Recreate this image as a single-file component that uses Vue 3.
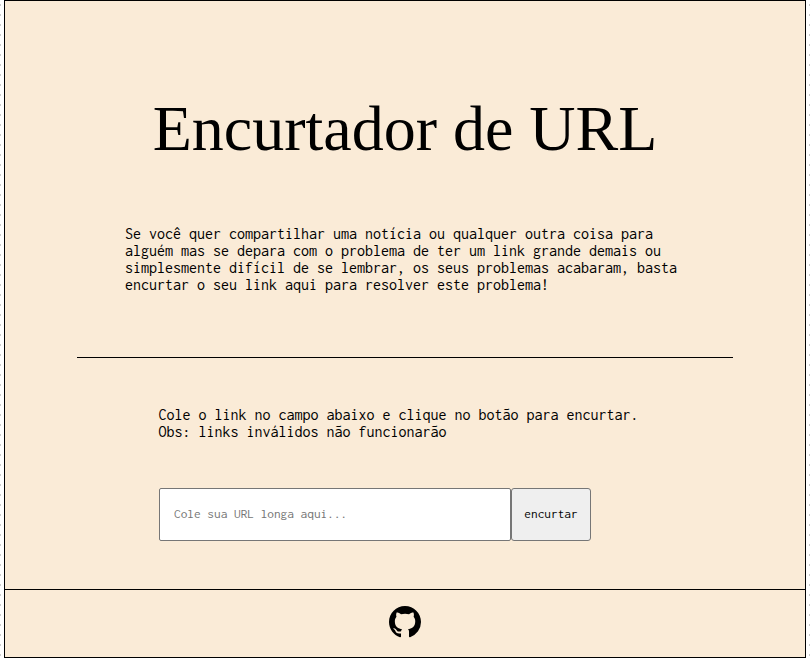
<script setup>
import { ref } from 'vue'

const url = ref('')
</script>

<template>
  <div class="page">
    <div class="frame">
      <main class="content">
        <h1 class="title">Encurtador de URL</h1>
        <p class="intro">
          Se você quer compartilhar uma notícia ou qualquer outra coisa para<br />
          alguém mas se depara com o problema de ter um link grande demais ou<br />
          simplesmente difícil de se lembrar, os seus problemas acabaram, basta<br />
          encurtar o seu link aqui para resolver este problema!
        </p>
        <section class="shortener">
          <p class="hint">
            Cole o link no campo abaixo e clique no botão para encurtar.<br />
            Obs: links inválidos não funcionarão
          </p>
          <form class="form" @submit.prevent>
            <input v-model="url" class="field" type="text" placeholder="Cole sua URL longa aqui..." />
            <button class="submit" type="submit">encurtar</button>
          </form>
        </section>
      </main>
      <footer class="footer">
        <svg class="github" viewBox="0 0 16 16" aria-hidden="true">
          <path d="M8 0C3.58 0 0 3.58 0 8c0 3.54 2.29 6.53 5.47 7.59.4.07.55-.17.55-.38 0-.19-.01-.82-.01-1.49-2.01.37-2.53-.49-2.69-.94-.09-.23-.48-.94-.82-1.13-.28-.15-.68-.52-.01-.53.63-.01 1.08.58 1.23.82.72 1.21 1.87.87 2.33.66.07-.52.28-.87.51-1.07-1.78-.2-3.64-.89-3.64-3.95 0-.87.31-1.59.82-2.15-.08-.2-.36-1.02.08-2.12 0 0 .67-.21 2.2.82.64-.18 1.32-.27 2-.27s1.36.09 2 .27c1.53-1.04 2.2-.82 2.2-.82.44 1.1.16 1.92.08 2.12.51.56.82 1.27.82 2.15 0 3.07-1.87 3.75-3.65 3.95.29.25.54.73.54 1.48 0 1.07-.01 1.93-.01 2.2 0 .21.15.46.55.38A8.01 8.01 0 0 0 16 8c0-4.42-3.58-8-8-8z" />
        </svg>
      </footer>
    </div>
  </div>
</template>

<style>
body {
  margin: 0;
  background: #fff;
}
</style>

<style scoped>
.page {
  box-sizing: border-box;
  height: 658px;
  padding: 0 4px;
  background:
    repeating-linear-gradient(to bottom, transparent 0 4px, #ccc 4px 6px, transparent 6px 10px) left / 1px 100% no-repeat,
    repeating-linear-gradient(to bottom, transparent 0 4px, #ccc 4px 6px, transparent 6px 10px) right / 1px 100% no-repeat;
}

.frame {
  box-sizing: border-box;
  height: 658px;
  display: flex;
  flex-direction: column;
  border: 1px solid #000;
  background: #faebd7;
  color: #000;
  font-family: Inconsolata, 'DejaVu Sans Mono', monospace;
  font-size: 16px;
  line-height: 17px;
}

.content {
  flex: 1;
}

.title {
  margin: 91px 0 0;
  font: 400 64px/74px 'Liberation Serif', serif;
  text-align: center;
}

.intro {
  margin: 59px 0 0;
  padding-left: 120px;
  white-space: nowrap;
}

.shortener {
  margin: 64px 72px 0;
  padding: 48px 0 0 81.5px;
  border-top: 1px solid #000;
}

.hint {
  margin: 0;
  white-space: nowrap;
}

.form {
  display: flex;
  margin: 48px 0 0 0.5px;
}

.field,
.submit {
  box-sizing: border-box;
  height: 53px;
  margin: 0;
  border: 1px solid #767676;
  border-radius: 2px;
  font-family: inherit;
  font-size: 13.333px;
}

.field {
  width: 352px;
  padding: 0 14px 2px;
  background: #fff;
  outline: none;
}

.field::placeholder {
  color: #757575;
  opacity: 1;
}

.submit {
  width: 80px;
  padding: 0 0 2px;
  border-radius: 3px;
  background: #efefef;
  color: #000;
}

.footer {
  box-sizing: border-box;
  height: 68px;
  display: flex;
  justify-content: center;
  padding-top: 16px;
  border-top: 1px solid #000;
}

.github {
  width: 32px;
  height: 32px;
}
</style>
